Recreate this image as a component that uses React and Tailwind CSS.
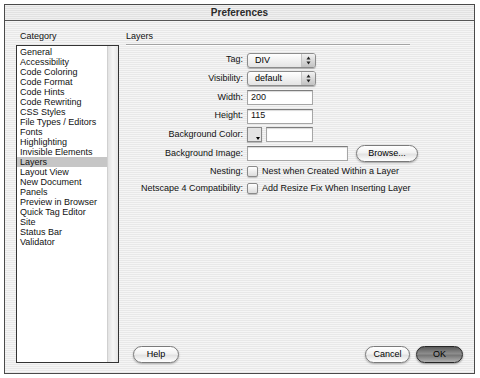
const stripes =
  "bg-[repeating-linear-gradient(to_bottom,#f5f5f5_0px,#f5f5f5_1px,#e8e8e8_1px,#e8e8e8_2px)]";

const categories = [
  "General",
  "Accessibility",
  "Code Coloring",
  "Code Format",
  "Code Hints",
  "Code Rewriting",
  "CSS Styles",
  "File Types / Editors",
  "Fonts",
  "Highlighting",
  "Invisible Elements",
  "Layers",
  "Layout View",
  "New Document",
  "Panels",
  "Preview in Browser",
  "Quick Tag Editor",
  "Site",
  "Status Bar",
  "Validator",
];

function Select({ value }) {
  return (
    <div className="flex h-[15px] w-[69px] items-center rounded-[3px] border border-[#8c8c8c] bg-gradient-to-b from-white to-[#e4e4e4] shadow-[0_1px_1px_rgba(0,0,0,0.25)]">
      <span className="flex-1 pl-[7px] leading-none text-black">{value}</span>
      <span className="flex h-full w-[14px] items-center justify-center rounded-r-[2px] border-l border-[#c4c4c4] bg-gradient-to-b from-[#f2f2f2] to-[#c2c2c2]">
        <svg width="5" height="9" viewBox="0 0 5 9">
          <path d="M2.5 0.5 L4.5 3.5 L0.5 3.5 Z" fill="#222" />
          <path d="M2.5 8.5 L4.5 5.5 L0.5 5.5 Z" fill="#222" />
        </svg>
      </span>
    </div>
  );
}

function TextBox({ value, width }) {
  return (
    <div
      className={`flex h-[15px] items-center border border-[#a6a6a6] border-t-[#7c7c7c] bg-white pl-[3px] shadow-[inset_0_1px_1px_rgba(0,0,0,0.15)] ${width}`}
    >
      {value}
    </div>
  );
}

function Check() {
  return (
    <div className="h-[11px] w-[11px] rounded-[2px] border border-[#8a8a8a] bg-gradient-to-b from-white to-[#dcdcdc] shadow-[0_1px_1px_rgba(0,0,0,0.2)]" />
  );
}

function Pill({ label, width, primary }) {
  return (
    <button
      className={`flex h-[17px] items-center justify-center rounded-full border text-[9px] ${width} ${
        primary
          ? "border-[#262626] bg-[linear-gradient(to_bottom,#5a5a5a,#8e8e8e_45%,#767676_55%,#b0b0b0)] text-black shadow-[0_1px_2px_rgba(0,0,0,0.4)]"
          : "border-[#7a7a7a] bg-[linear-gradient(to_bottom,#ffffff,#f2f2f2_45%,#e2e2e2_55%,#ffffff)] text-black shadow-[0_1px_2px_rgba(0,0,0,0.3)]"
      }`}
    >
      {label}
    </button>
  );
}

function Row({ label, h, children }) {
  return (
    <div className={`flex items-center ${h}`}>
      <div className="w-[117px] shrink-0 text-right text-[#111]">{label}</div>
      <div className="ml-[4px] flex items-center gap-[3px]">{children}</div>
    </div>
  );
}

export default function App() {
  return (
    <div className="h-[378px] w-[480px] bg-white pl-[4px] pt-[4px] font-['Liberation_Sans',Arial,sans-serif] text-[9px] text-[#111]">
      <div className={`flex h-[370px] w-[471px] flex-col border border-[#4a4a4a] ${stripes}`}>
        {/* title bar */}
        <div className="flex h-[16px] shrink-0 items-center justify-center border-b border-[#555] bg-[repeating-linear-gradient(to_bottom,#f0f0f0_0px,#f0f0f0_1px,#e2e2e2_1px,#e2e2e2_2px)] text-[10px] font-bold text-[#2a2a2a]">
          Preferences
        </div>

        <div className="flex min-h-0 flex-1 pb-[10px] pl-[11px]">
          {/* category column */}
          <div className="flex w-[103px] shrink-0 flex-col">
            <div className="mt-[9px] h-[12px] pl-[4px] leading-[12px]">Category</div>
            <div className="mt-[3px] flex min-h-0 flex-1 border border-[#333] bg-white">
              <div className="flex-1 pt-[1px]">
                {categories.map((c) => (
                  <div
                    key={c}
                    className={`h-[10px] pl-[3px] leading-[10px] ${
                      c === "Layers" ? "bg-[#c6c6c6]" : ""
                    }`}
                  >
                    {c}
                  </div>
                ))}
              </div>
              <div className="w-[11px] border-l border-[#d0d0d0] bg-gradient-to-r from-[#e2e2e2] via-[#f6f6f6] to-[#e6e6e6]" />
            </div>
          </div>

          {/* panel column */}
          <div className="ml-[7px] flex flex-1 flex-col pr-[8px]">
            <div className="mt-[9px] h-[12px] leading-[12px]">Layers</div>
            <div className="mt-[2px] h-[2px] w-[284px] border-b border-white bg-[#a4a4a4]" />

            <div className="mt-[5px] flex flex-col">
              <Row label="Tag:" h="h-[18px]">
                <Select value="DIV" />
              </Row>
              <Row label="Visibility:" h="h-[19px]">
                <Select value="default" />
              </Row>
              <Row label="Width:" h="h-[19px]">
                <TextBox value="200" width="w-[66px]" />
              </Row>
              <Row label="Height:" h="h-[18px]">
                <TextBox value="115" width="w-[66px]" />
              </Row>
              <Row label="Background Color:" h="h-[19px]">
                <div className="relative h-[15px] w-[15px] border border-[#8a8a8a] bg-[#e4e4e4] shadow-[0_1px_1px_rgba(0,0,0,0.2)]">
                  <div className="absolute bottom-[1px] right-[1px] h-0 w-0 border-l-[2px] border-r-[2px] border-t-[3px] border-l-transparent border-r-transparent border-t-black" />
                </div>
                <div className="ml-[1px]">
                  <TextBox value="" width="w-[47px]" />
                </div>
              </Row>
              <Row label="Background Image:" h="h-[19px]">
                <TextBox value="" width="w-[101px]" />
                <div className="ml-[5px]">
                  <Pill label="Browse..." width="w-[62px]" />
                </div>
              </Row>
              <Row label="Nesting:" h="h-[17px]">
                <Check />
                <span className="ml-[1px]">Nest when Created Within a Layer</span>
              </Row>
              <Row label="Netscape 4 Compatibility:" h="h-[17px]">
                <Check />
                <span className="ml-[1px]">Add Resize Fix When Inserting Layer</span>
              </Row>
            </div>

            <div className="mt-auto flex items-center pl-[7px]">
              <Pill label="Help" width="w-[46px]" />
              <div className="ml-auto flex items-center gap-[6px] pr-[3px]">
                <Pill label="Cancel" width="w-[45px]" />
                <Pill label="OK" width="w-[47px]" primary />
              </div>
            </div>
          </div>
        </div>
      </div>
    </div>
  );
}
